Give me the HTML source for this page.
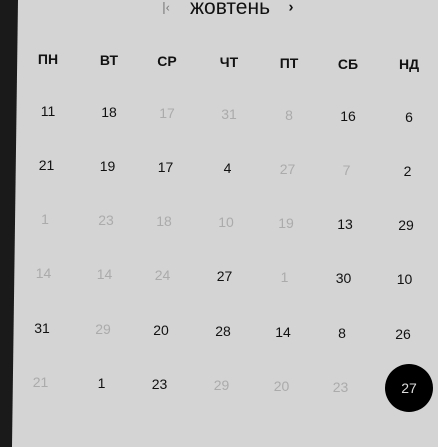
<!DOCTYPE html>
<html><head><meta charset="utf-8"><style>
body{margin:0;width:438px;height:447px;background:#d4d4d4;position:relative;overflow:hidden;font-family:"Liberation Sans","DejaVu Sans",sans-serif}
.strip{position:absolute;left:0;top:0;width:20px;height:447px;background:#1a1a1a;clip-path:polygon(0 0,18px 0,12px 447px,0 447px)}
.t{position:absolute;transform:translate(-50%,-50%);font-size:14px;color:#111;white-space:nowrap}
.h{font-weight:bold;font-size:14px}
.g{color:#ababab}
.sel{width:48px;height:48px;border-radius:50%;background:#000;color:#ddd;display:flex;align-items:center;justify-content:center}
</style></head><body>
<div class="strip"></div>
<div class="t" style="left:166px;top:7px;color:#777;font-size:13px">|<span style="font-size:12px">‹</span></div>
<div class="t" style="left:230px;top:8px;font-size:21px">жовтень</div>
<div class="t" style="left:291px;top:7px;font-size:15px;font-weight:bold">›</div>
<div id="g"></div>
<script>
var xs=[48,109,167,229,289,348,409];
var heads=["ПН","ВТ","СР","ЧТ","ПТ","СБ","НД"];
var rows=[
["11","18","g17","g31","g8","16","6"],
["21","19","17","4","g27","g7","2"],
["g1","g23","g18","g10","g19","13","29"],
["g14","g14","g24","27","g1","30","10"],
["31","g29","20","28","14","8","26"],
["g21","1","23","g29","g20","g23","s27"]];
var ys=[111,165,219,273,328,382];
var h="";
heads.forEach(function(t,i){h+='<div class="t h" style="left:'+xs[i]+'px;top:'+(59+i*0.9)+'px">'+t+'</div>';});
rows.forEach(function(r,ri){r.forEach(function(v,i){var y=ys[ri]+i*1;var x=xs[i]-ri*1.5;var c="t";
if(v[0]=="g"){c+=" g";v=v.slice(1);}
if(v[0]=="s"){c+=" sel";v=v.slice(1);y=388;x=409;}
h+='<div class="'+c+'" style="left:'+x+'px;top:'+y+'px">'+v+'</div>';});});
document.getElementById("g").innerHTML=h;
</script>
</body></html>
